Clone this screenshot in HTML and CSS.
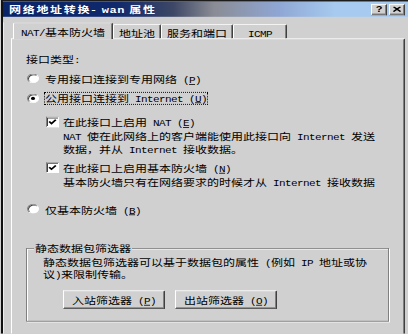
FILE: index.html
```html
<!DOCTYPE html>
<html lang="zh-CN">
<head>
    <meta charset="UTF-8">
    <title>网络地址转换- wan 属性</title>
    <link rel="stylesheet" href="styles.css">
</head>
<body>
  <div class="screen">
    <div class="window">
        <div class="titlebar">
            <span class="title">网络地址转换- <span class="en">wan</span> 属性</span>
            <div class="title-buttons">
                <span class="tbtn">?</span>
                <span class="tbtn">
                    <svg width="8" height="7" viewBox="0 0 8 7"><path d="M0.5 0.5 L7.5 6.5 M7.5 0.5 L0.5 6.5" stroke="#000" stroke-width="1.6"/></svg>
                </span>
            </div>
        </div>

        <div class="frame">
            <div class="tabs">
                <div class="tab active"><span class="en">NAT/</span>基本防火墙</div>
                <div class="tab">地址池</div>
                <div class="tab">服务和端口</div>
                <div class="tab tab-icmp"><span class="en">ICMP</span></div>
            </div>

            <div class="panel">
                <div class="heading">接口类型<span class="en">:</span></div>

                <div class="row radio-row first">
                    <span class="radio"></span>
                    <span>专用接口连接到专用网络<span class="en"> (<u>P</u>)</span></span>
                </div>
                <div class="row radio-row gap-9">
                    <span class="radio checked"></span>
                    <span class="focus">公用接口连接到<span class="en"> Internet (<u>U</u>)</span></span>
                </div>

                <div class="row check-row gap-13">
                    <span class="check">
                        <svg width="9" height="9" viewBox="0 0 9 9"><polyline points="1.2,4 3.5,6.5 7.8,1.8" fill="none" stroke="#000" stroke-width="1.9"/></svg>
                    </span>
                    <span>在此接口上启用<span class="en"> NAT (<u>E</u>)</span></span>
                </div>
                <div class="desc">
                    <span class="en">NAT </span>使在此网络上的客户端能使用此接口向<span class="en"> Internet </span>发送<br>数据，并从<span class="en"> Internet </span>接收数据。
                </div>

                <div class="row check-row gap-6">
                    <span class="check">
                        <svg width="9" height="9" viewBox="0 0 9 9"><polyline points="1.2,4 3.5,6.5 7.8,1.8" fill="none" stroke="#000" stroke-width="1.9"/></svg>
                    </span>
                    <span>在此接口上启用基本防火墙<span class="en"> (<u>N</u>)</span></span>
                </div>
                <div class="desc">
                    基本防火墙只有在网络要求的时候才从<span class="en"> Internet </span>接收数据
                </div>

                <div class="row radio-row gap-17">
                    <span class="radio"></span>
                    <span>仅基本防火墙<span class="en"> (<u>B</u>)</span></span>
                </div>

                <fieldset class="group">
                    <legend>静态数据包筛选器</legend>
                    <div class="group-text">
                        静态数据包筛选器可以基于数据包的属性<span class="en"> (</span>例如<span class="en"> IP </span>地址或协<br>议<span class="en">)</span>来限制传输。
                    </div>
                    <div class="btn-row">
                        <button class="btn">入站筛选器<span class="en"> (<u>P</u>)</span></button>
                        <button class="btn">出站筛选器<span class="en"> (<u>O</u>)</span></button>
                    </div>
                </fieldset>
            </div>
        </div>
    </div>
  </div>
</body>
</html>
```

FILE: styles.css
```css
html, body {
    margin: 0;
    padding: 0;
    overflow: hidden;
    background-color: #d0d0d0;
}
body {
    font-family: "Noto Sans CJK SC", sans-serif;
    font-size: 12px;
    color: #000;
}
.screen {
    width: 408px;
    height: 334px;
    overflow: hidden;
}
.en {
    font-family: "Liberation Mono", monospace;
    font-size: 11px;
    letter-spacing: -0.6px;
}
u {
    text-decoration-thickness: 1px;
    text-underline-offset: 1px;
}

/* the screenshot is squashed vertically, so the whole window is too */
.window {
    box-sizing: border-box;
    width: 407px;
    height: 417px;
    margin-left: 1px;
    border-top: 2px solid #1c1c1c;
    border-left: 2px solid #111;
    background-color: #d0d0d0;
    overflow: hidden;
    transform: scaleY(0.8);
    transform-origin: 0 0;
}

.titlebar {
    height: 19px;
    display: flex;
    align-items: center;
    justify-content: space-between;
    padding: 0 3px;
    background: linear-gradient(90deg, #0a246a 0%, #10296c 28%, #3d4766 42%, #8a8c94 52%, #8fa6d4 68%, #a6caf0 82%, #a6caf0 100%);
}
.title {
    color: #fff;
    font-weight: bold;
    letter-spacing: 1.7px;
    padding-left: 3px;
    line-height: 19px;
}
.title .en {
    font-size: 12px;
    letter-spacing: 0.5px;
}
.title-buttons {
    display: flex;
    gap: 2px;
}
.tbtn {
    box-sizing: border-box;
    width: 16px;
    height: 14px;
    display: flex;
    align-items: center;
    justify-content: center;
    background-color: #d0d0d0;
    border: 1px solid;
    border-color: #fff #404040 #404040 #fff;
    box-shadow: inset -1px -1px 0 #808080;
    font-family: "Liberation Sans", sans-serif;
    font-weight: bold;
    font-size: 11px;
    line-height: 1;
}

.frame {
    border-left: 1px solid #eee;
    height: 400px;
}

.tabs {
    display: flex;
    align-items: flex-end;
    height: 20px;
    margin: 7px 0 0 9px;
}
.tab {
    box-sizing: border-box;
    height: 18px;
    padding: 1px 5px 0;
    line-height: 17px;
    border-top: 1px solid #fff;
    border-left: 1px solid #fff;
    border-right: 1px solid #404040;
    box-shadow: inset -1px 0 0 #808080;
    border-radius: 2px 2px 0 0;
    white-space: nowrap;
}
.tab.active {
    height: 21px;
    margin-bottom: -1px;
    padding: 3px 7px 0;
    line-height: 16px;
    background-color: #d0d0d0;
    position: relative;
    z-index: 1;
}
.tab-icmp {
    padding: 1px 14px 0;
}

.panel {
    box-sizing: border-box;
    width: 394px;
    height: 380px;
    margin-left: 7px;
    padding: 0 15px 0 14px;
    border-top: 1px solid #fff;
    border-left: 1px solid #fff;
    border-right: 1px solid #404040;
    box-shadow: inset -1px 0 0 #808080;
}

.heading {
    margin-top: 17px;
    line-height: 16px;
}

.row {
    display: flex;
    align-items: center;
    height: 16px;
    white-space: nowrap;
}
.first { margin-top: 6px; }
.gap-6 { margin-top: 6px; }
.gap-9 { margin-top: 9px; }
.gap-13 { margin-top: 13px; }
.gap-17 { margin-top: 17px; }

.radio-row {
    padding-left: 1px;
}
.radio {
    box-sizing: border-box;
    width: 12px;
    height: 12px;
    margin-right: 6px;
    border-radius: 50%;
    border: 1px solid;
    border-color: #808080 #fff #fff #808080;
    background-color: #fff;
    box-shadow: inset 1px 1px 0 #404040;
    display: flex;
    align-items: center;
    justify-content: center;
}
.radio.checked::after {
    content: "";
    width: 4px;
    height: 4px;
    border-radius: 50%;
    background-color: #000;
}
.focus {
    margin-left: -1px;
    border: 1px dotted #000;
    line-height: 12px;
}

.check-row {
    padding-left: 20px;
}
.check {
    box-sizing: border-box;
    width: 13px;
    height: 13px;
    margin-right: 4px;
    border: 1px solid;
    border-color: #808080 #fff #fff #808080;
    background-color: #fff;
    box-shadow: inset 1px 1px 0 #404040;
    display: flex;
    align-items: center;
    justify-content: center;
}

.desc {
    margin-top: 3px;
    padding-left: 37px;
    line-height: 14px;
    white-space: nowrap;
}

.group {
    margin: 34px 0 0;
    padding: 3px 16px 15px;
    min-width: 0;
    border: 1px solid #808080;
    box-shadow: 1px 1px 0 #fff, inset 1px 1px 0 #fff;
}
.group legend {
    margin-left: -9px;
    padding: 0 1px;
    line-height: 14px;
    background-color: #d0d0d0;
}
.group-text {
    line-height: 13px;
    white-space: nowrap;
}

.btn-row {
    display: flex;
    gap: 10px;
    margin-top: 11px;
    padding-left: 20px;
}
.btn {
    box-sizing: border-box;
    height: 23px;
    padding: 0 8px;
    font-family: inherit;
    font-size: 12px;
    color: #000;
    background-color: #d0d0d0;
    border: 1px solid;
    border-color: #fff #404040 #404040 #fff;
    box-shadow: inset -1px -1px 0 #808080;
    border-radius: 0;
}
```
